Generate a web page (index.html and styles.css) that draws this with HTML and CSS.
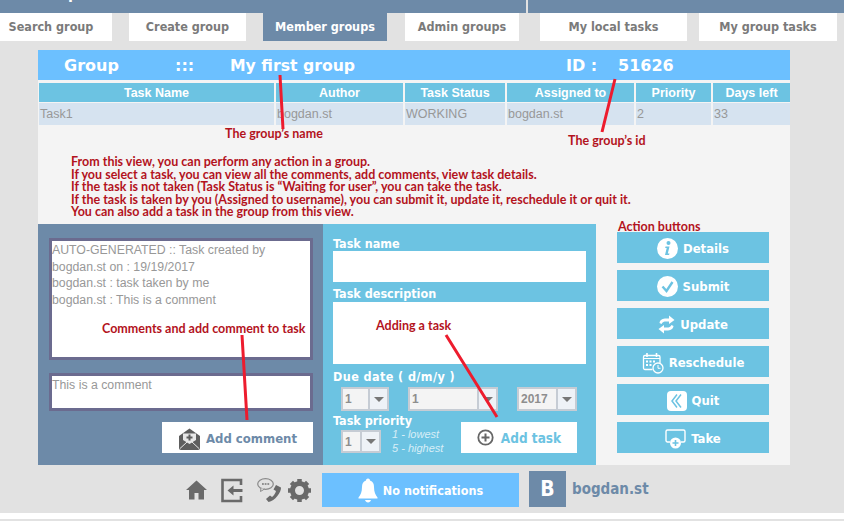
FILE: index.html
```html
<!DOCTYPE html>
<html lang="en">
<head>
    <meta charset="UTF-8">
    <title>My first group</title>
    <link rel="stylesheet" href="styles.css">
</head>
<body>
    <div class="topbar">
        <div class="top-left"><span>Group view</span></div>
        <div class="top-right"><span>Local tasks</span></div>
    </div>

    <div class="tabs">
        <div class="tab t1">Search group</div>
        <div class="tab t2">Create group</div>
        <div class="tab t3 active">Member groups</div>
        <div class="tab t4">Admin groups</div>
        <div class="tab t5">My local tasks</div>
        <div class="tab t6">My group tasks</div>
    </div>

    <div class="panel">
        <div class="group-head">
            <span class="gh-label">Group</span>
            <span class="gh-sep">:::</span>
            <span class="gh-name">My first group</span>
            <span class="gh-id">ID :</span>
            <span class="gh-num">51626</span>
        </div>

        <table class="tasks">
            <thead>
                <tr>
                    <td class="c1">Task Name</td>
                    <td class="c2">Author</td>
                    <td class="c3">Task Status</td>
                    <td class="c4">Assigned to</td>
                    <td class="c5">Priority</td>
                    <td class="c6">Days left</td>
                </tr>
            </thead>
            <tbody>
                <tr>
                    <td>Task1</td>
                    <td>bogdan.st</td>
                    <td>WORKING</td>
                    <td>bogdan.st</td>
                    <td>2</td>
                    <td>33</td>
                </tr>
            </tbody>
        </table>

        <div class="notes">
            <div>From this view, you can perform any action in a group.</div>
            <div>If you select a task, you can view all the comments, add comments, view task details.</div>
            <div>If the task is not taken (Task Status is “Waiting for user”, you can take the task.</div>
            <div>If the task is taken by you (Assigned to username), you can submit it, update it, reschedule it or quit it.</div>
            <div>You can also add a task in the group from this view.</div>
        </div>

        <div class="bottom">
            <div class="comments">
                <div class="comment-list">
                    <div>AUTO-GENERATED :: Task created by</div>
                    <div>bogdan.st on : 19/19/2017</div>
                    <div>bogdan.st : task taken by me</div>
                    <div>bogdan.st : This is a comment</div>
                </div>
                <div class="comment-input">This is a comment</div>
                <div class="add-comment">
                    <svg width="23" height="22" viewBox="0 0 23 22">
                        <path d="M11.500 0.500L22 8V20a2 2 0 0 1-2 2H3a2 2 0 0 1-2-2V8Z" fill="#5e5e5e"/>
                        <path d="M5 5.500H18V12L11.500 16L5 12Z" fill="#e8e8e8"/>
                        <path d="M11.500 6.500V12.500M8.500 9.500H14.500" stroke="#5e5e5e" stroke-width="2"/>
                        <path d="M2 20.500L9 14M21 20.500L14 14" stroke="#e8e8e8" stroke-width="1"/>
                    </svg>
                    <span>Add comment</span>
                </div>
            </div>

            <div class="new-task">
                <div class="field-label">Task name</div>
                <div class="field name-field"></div>
                <div class="field-label desc-label">Task description</div>
                <div class="field desc-field"></div>
                <div class="field-label date-label">Due date ( d/m/y )</div>
                <div class="date-row">
                    <div class="select s-day"><span class="val">1</span><span class="arrow"></span></div>
                    <div class="select s-month"><span class="val">1</span><span class="arrow"></span></div>
                    <div class="select s-year"><span class="val">2017</span><span class="arrow"></span></div>
                </div>
                <div class="priority-row">
                    <div class="priority">
                        <div class="field-label prio-label">Task priority</div>
                        <div class="prio-line">
                            <div class="select s-prio"><span class="val">1</span><span class="arrow"></span></div>
                            <div class="hint"><div>1 - lowest</div><div>5 - highest</div></div>
                        </div>
                    </div>
                    <div class="add-task">
                        <svg width="17" height="17" viewBox="0 0 17 17">
                            <circle cx="8.500" cy="8.500" r="7.200" fill="none" stroke="#666" stroke-width="1.800"/>
                            <path d="M8.500 4.500V12.500M4.500 8.500H12.500" stroke="#666" stroke-width="2"/>
                        </svg>
                        <span>Add task</span>
                    </div>
                </div>
            </div>

            <div class="actions">
                <div class="action">
                    <svg width="21" height="21" viewBox="0 0 21 21">
                        <circle cx="10.500" cy="10.500" r="10.500" fill="#fff"/>
                        <circle cx="11.500" cy="5" r="2" fill="#6cc3e2"/>
                        <path d="M8.500 8.500H12.500L10.800 15.500L12.500 15.500L12 17H8L9.700 10H8.200Z" fill="#6cc3e2"/>
                    </svg>
                    <span>Details</span>
                </div>
                <div class="action">
                    <svg width="21" height="21" viewBox="0 0 21 21">
                        <circle cx="10.500" cy="10.500" r="10.500" fill="#fff"/>
                        <path d="M5.500 10.500L9.500 15L15.500 6" fill="none" stroke="#6cc3e2" stroke-width="2.400"/>
                    </svg>
                    <span>Submit</span>
                </div>
                <div class="action">
                    <svg width="17" height="19" viewBox="0 0 17 19">
                        <path d="M1.500 8C2 4.500 5 3.500 8 3.500H11V0.500L16.500 5L11 9V6.500H8C6 6.500 4.500 7 3.500 9Z" fill="#fff"/>
                        <path d="M15.500 11C15 14.500 12 15.500 9 15.500H6V18.500L0.500 14L6 10V12.500H9C11 12.500 12.500 12 13.500 10Z" fill="#fff"/>
                    </svg>
                    <span>Update</span>
                </div>
                <div class="action">
                    <svg width="22" height="22" viewBox="0 0 22 22">
                        <path d="M3 3.500H16.500A1.500 1.500 0 0 1 18 5V11.500M10.500 17.500H3A1.500 1.500 0 0 1 1.500 16V5A1.500 1.500 0 0 1 3 3.500" fill="none" stroke="#fff" stroke-width="1.300"/>
                        <path d="M5 1V5M14.500 1V5" stroke="#fff" stroke-width="1.600"/>
                        <path d="M2 6.500H18" stroke="#fff"/>
                        <path d="M4 8.500h2v2H4zM7.500 8.500h2v2h-2zM11 8.500h2v2h-2zM4 12h2v2H4zM7.500 12h2v2h-2z" fill="#fff"/>
                        <circle cx="16" cy="16" r="5" fill="#6cc3e2" stroke="#fff" stroke-width="1.300"/>
                        <path d="M16 13V16.300H18.500" fill="none" stroke="#fff"/>
                    </svg>
                    <span>Reschedule</span>
                </div>
                <div class="action">
                    <svg width="20" height="20" viewBox="0 0 20 20">
                        <rect width="20" height="20" rx="4" fill="#fff"/>
                        <path d="M10 3.500L5 10L10 16.500M14 3.500L9 10L14 16.500" fill="none" stroke="#6cc3e2" stroke-width="1.500"/>
                    </svg>
                    <span>Quit</span>
                </div>
                <div class="action">
                    <svg width="21" height="20" viewBox="0 0 21 20">
                        <path d="M5 13H2.500A1.500 1.500 0 0 1 1 11.500V2.500A1.500 1.500 0 0 1 2.500 1H18.500A1.500 1.500 0 0 1 20 2.500V11.500A1.500 1.500 0 0 1 18.500 13H16" fill="none" stroke="#fff" stroke-width="1.400"/>
                        <circle cx="10.500" cy="14" r="5.500" fill="#fff"/>
                        <path d="M10.500 11V17M7.500 14H13.500" stroke="#6cc3e2" stroke-width="1.600"/>
                    </svg>
                    <span>Take</span>
                </div>
            </div>
        </div>
    </div>

    <div class="footer">
        <svg class="f-home" width="21" height="20" viewBox="0 0 21 20">
            <path d="M10.500 0.500L21 10H18V19.500H12.500V13H8.500V19.500H3V10H0Z" fill="#6a6a6a"/>
        </svg>
        <svg class="f-exit" width="22" height="25" viewBox="0 0 22 25">
            <path d="M20 7V2H1.500V23H20V18" fill="none" stroke="#6a6a6a" stroke-width="2.600"/>
            <path d="M21.500 11H12.500V7.500L6.500 12.500L12.500 17.500V14H21.500Z" fill="#6a6a6a"/>
        </svg>
        <svg class="f-phone" width="25" height="25" viewBox="0 0 25 25">
            <ellipse cx="8.500" cy="6" rx="7.800" ry="5.300" fill="none" stroke="#8a8a8a" stroke-width="1.200"/>
            <path d="M4 10L3.500 13.500L7.500 11" fill="#e2e2e2" stroke="#8a8a8a" stroke-width="1"/>
            <path d="M5 6h1.800M7.700 6h1.800M10.400 6h1.800" stroke="#777" stroke-width="1.400"/>
            <path d="M19 7L24 9.500C24.500 14 18 23 11.500 24L9 21L13 17.500L15 19C16.500 18 18.500 15 19 13L16.500 11.500Z" fill="#6a6a6a"/>
        </svg>
        <svg class="f-gear" width="25" height="25" viewBox="0 0 25 25">
            <circle cx="12.500" cy="12.500" r="7" fill="none" stroke="#6a6a6a" stroke-width="5"/>
            <path d="M12.500 1V24M1 12.500H24M4.400 4.400L20.600 20.600M20.600 4.400L4.400 20.600" stroke="#6a6a6a" stroke-width="4.500" stroke-dasharray="5 13 5 0"/>
        </svg>
        <div class="notify">
            <svg width="20" height="25" viewBox="0 0 20 25">
                <path d="M10 0.500C11.500 0.500 12 1.500 12 2.500C15 3.500 16 6 16 9C16 14 17.500 17 19.500 19.500V20.500H0.500V19.500C2.500 17 4 14 4 9C4 6 5 3.500 8 2.500C8 1.500 8.500 0.500 10 0.500Z" fill="#fff"/>
                <path d="M7 22H13C12.500 23.500 11.500 24.500 10 24.500C8.500 24.500 7.500 23.500 7 22Z" fill="#fff"/>
            </svg>
            <span>No notifications</span>
        </div>
        <div class="avatar">B</div>
        <div class="username">bogdan.st</div>
    </div>
    <div class="strip"></div>

    <div class="note-label l-name">The group’s name</div>
    <div class="note-label l-id">The group’s id</div>
    <div class="note-label l-comments">Comments and add comment to task</div>
    <div class="note-label l-adding">Adding a task</div>
    <div class="note-label l-actions">Action buttons</div>

    <svg class="pointers" width="844" height="521" viewBox="0 0 844 521">
        <path d="M280 75L283 129M615 79L602 132M242 335L247 420M446 335L497 417" stroke="#ed1c2e" stroke-width="3" fill="none"/>
    </svg>
</body>
</html>
```

FILE: styles.css
```css
*{
    box-sizing: border-box;
}
body{
    margin: 0;
    width: 844px;
    height: 521px;
    overflow: hidden;
    position: relative;
    background-color: #e2e2e2;
    font-family: "DejaVu Sans Condensed", "DejaVu Sans", sans-serif;
}

/* top */
.topbar{
    display: flex;
    height: 13px;
    background: #6d8aa8;
    overflow: hidden;
}
.top-left, .top-right{
    display: flex;
    align-items: flex-end;
    height: 13px;
    color: #fff;
    font-weight: bold;
    font-size: 16px;
    line-height: 20px;
}
.top-left{
    width: 528px;
    padding-left: 29px;
    border-right: 2px solid #e2e2e2;
}
.top-left span, .top-right span{
    margin-bottom: 9px;
    white-space: nowrap;
}
.top-right{
    padding-left: 25px;
    color: #a9bccd;
}
.tabs{
    display: flex;
    height: 28px;
}
.tab{
    height: 28px;
    line-height: 28px;
    text-align: center;
    background: #fff;
    color: #7a7a7a;
    font-size: 12.500px;
    font-weight: bold;
}
.t1{ width: 112px; padding-right: 10px; }
.t2{ width: 117px; margin-left: 17px; }
.t3{ width: 124px; margin-left: 17px; }
.t4{ width: 114px; margin-left: 18px; }
.t5{ width: 147px; margin-left: 21px; }
.t6{ width: 138px; margin-left: 12px; }
.tab.active{
    background: #6d8aa8;
    color: #fff;
}

/* panel */
.panel{
    width: 752px;
    height: 415px;
    margin: 9px 0 0 38px;
    background: #f4f4f4;
}
.group-head{
    display: flex;
    height: 30px;
    line-height: 31px;
    background: #6cc0ff;
    color: #fff;
    font-family: "DejaVu Sans", sans-serif;
    font-size: 16px;
    font-weight: bold;
}
.gh-label{ margin-left: 26px; width: 111px; }
.gh-sep{ width: 55px; }
.gh-name{ width: 336px; font-size: 15.700px; }
.gh-id{ width: 52px; }

.tasks{
    width: 752px;
    table-layout: fixed;
    border-collapse: separate;
    border-spacing: 2px 1px;
    margin: 2px 0 0 -1px;
    font-family: "Liberation Sans", sans-serif;
    font-size: 12.500px;
}
.tasks thead td{
    height: 19px;
    padding: 1px 0 0;
    background: #6cc3e2;
    color: #fff;
    font-weight: bold;
    text-align: center;
}
.tasks tbody td{
    height: 22px;
    padding: 0 1px;
    background: #d6e3f0;
    color: #989898;
}
.c1{ width: 235px; }
.c2{ width: 127px; }
.c3{ width: 100px; }
.c4{ width: 127px; }
.c5{ width: 75px; }
.c6{ width: 77px; }

.notes{
    height: 98px;
    padding: 30px 0 0 33px;
    color: #b3131d;
    font-family: Lato, "Open Sans", sans-serif;
    font-size: 12.500px;
    font-weight: bold;
    line-height: 12.500px;
}

/* bottom part */
.bottom{
    display: flex;
    height: 241px;
}
.comments{
    width: 285px;
    padding: 14px 10px 0 11px;
    background: #6d8aa8;
}
.comment-list, .comment-input{
    width: 264px;
    padding-top: 1px;
    border: 3px solid #6b6b8f;
    background: #fff;
    color: #989898;
    font-family: "Liberation Sans", sans-serif;
    font-size: 12.300px;
    line-height: 16.500px;
}
.comment-list{
    height: 122px;
}
.comment-input{
    height: 38px;
    margin-top: 13px;
}
.add-comment, .add-task{
    display: flex;
    align-items: center;
    justify-content: center;
    height: 31px;
    background: #fff;
    font-size: 13px;
    font-weight: bold;
}
.add-comment{
    width: 151px;
    margin: 11px 0 0 113px;
    padding-top: 2px;
    gap: 5px;
    color: #6d8aa8;
}
.new-task{
    width: 273px;
    height: 241px;
    padding: 12px 10px 0;
    background: #6cc3e2;
}
.field-label{
    color: #fff;
    font-size: 12.500px;
    font-weight: bold;
    line-height: 15px;
}
.field{
    width: 253px;
    background: #fff;
}
.name-field{ height: 31px; }
.desc-label{ margin-top: 4px; }
.desc-field{ height: 62px; margin-top: 1px; }
.date-label{ margin-top: 5px; letter-spacing: 0.400px; }
.date-row{
    display: flex;
    margin: 3px 0 0 8px;
}
.select{
    display: flex;
    height: 24px;
    border: 2px solid #c6ccd4;
    background: #f4f4f4;
    color: #8e8e8e;
    font-family: "Liberation Sans", sans-serif;
    font-size: 12px;
    font-weight: bold;
    line-height: 20px;
}
.val{
    flex: 1;
    padding-left: 2px;
}
.arrow{
    display: flex;
    align-items: center;
    justify-content: center;
    width: 19px;
    border-left: 2px solid #c6ccd4;
    background: #eef2f7;
}
.arrow::after{
    content: "";
    border-top: 5px solid #777;
    border-left: 5px solid transparent;
    border-right: 5px solid transparent;
}
.s-day{ width: 48px; }
.s-month{ width: 90px; margin-left: 19px; }
.s-year{ width: 60px; margin-left: 19px; }
.priority-row{
    display: flex;
    margin-top: 2px;
}
.priority{
    width: 128px;
}
.prio-line{
    display: flex;
    margin: 2px 0 0 8px;
}
.s-prio{
    width: 40px;
    height: 23px;
}
.hint{
    margin: -3px 0 0 11px;
    color: #d8eef7;
    font-family: "Liberation Sans", sans-serif;
    font-size: 11px;
    font-style: italic;
    line-height: 14px;
}
.add-task{
    width: 116px;
    margin-top: 9px;
    gap: 7px;
    color: #6cc3e2;
    font-size: 13.500px;
}
.actions{
    display: flex;
    flex-direction: column;
    gap: 7px;
    width: 152px;
    margin: 8px 0 0 21px;
}
.action{
    display: flex;
    align-items: center;
    justify-content: center;
    gap: 5px;
    height: 31px;
    padding-top: 2px;
    background: #6cc3e2;
    color: #fff;
    font-size: 13px;
    font-weight: bold;
}

/* footer */
.footer{
    display: flex;
    align-items: center;
    height: 48px;
    padding: 2px 0 0 186px;
    background: #e2e2e2;
}
.f-exit{ margin-left: 14px; }
.f-phone{ margin-left: 14px; }
.f-gear{ margin-left: 5px; }
.notify{
    display: flex;
    align-items: center;
    justify-content: center;
    gap: 5px;
    width: 197px;
    height: 34px;
    margin-left: 10px;
    background: #6cc0ff;
    color: #fff;
    font-size: 12.500px;
    font-weight: bold;
}
.avatar{
    width: 37px;
    height: 36px;
    margin: 0 0 2px 10px;
    background: #6d8aa8;
    color: #fff;
    font-size: 21px;
    font-weight: bold;
    line-height: 36px;
    text-align: center;
}
.username{
    margin: 0 0 2px 6px;
    color: #6d8aa8;
    font-size: 15px;
    font-weight: bold;
}
.strip{
    height: 6px;
    background: #fff;
}

/* red annotations over the screenshot */
.note-label{
    position: absolute;
    color: #b3131d;
    font-family: Lato, "Open Sans", sans-serif;
    font-size: 12.500px;
    font-weight: bold;
    line-height: 14px;
    white-space: nowrap;
}
.l-name{ left: 225px; top: 127px; }
.l-id{ left: 568px; top: 134px; }
.l-comments{ left: 102px; top: 322px; }
.l-adding{ left: 376px; top: 319px; }
.l-actions{ left: 618px; top: 220px; }
.pointers{
    position: absolute;
    left: 0;
    top: 0;
}
```
